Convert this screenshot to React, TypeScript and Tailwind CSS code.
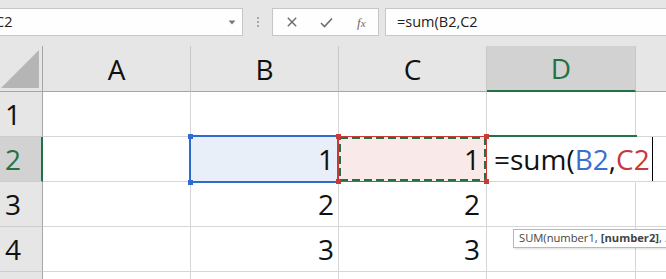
import React from 'react';

const GREEN = '#217346';
const cols = [
  { name: 'A', w: 'w-[148px]', pr: 'pr-[5px]' },
  { name: 'B', w: 'w-[148px]', pr: 'pr-[4px]' },
  { name: 'C', w: 'w-[148px]', pr: 'pr-[6px]' },
  { name: 'D', w: 'w-[149px]', pr: 'pr-[6px]' },
];

const rows: Record<number, (string | null)[]> = {
  1: [null, null, null, null],
  2: [null, '1', '1', null],
  3: [null, '2', '2', null],
  4: [null, '3', '3', null],
  5: [null, null, null, null],
};

function Handle({ className }: { className: string }) {
  return <span className={`absolute w-[5px] h-[5px] z-20 ${className}`} />;
}

function Toolbar() {
  return (
    <div className="h-[46px] flex items-start pt-[8px] overflow-hidden">
      <div className="-ml-[30px] w-[273px] h-[28px] shrink-0 border border-[#c6c6c6] bg-[#fefefe] flex items-center pl-[24px] pr-[6px] text-[14.5px] text-[#222]">
        <span>C2</span>
        <svg className="ml-auto" width="8" height="5" viewBox="0 0 8 5">
          <path d="M0.5 0.5 L7.5 0.5 L4 4.5 Z" fill="#7a7a7a" />
        </svg>
      </div>
      <div className="ml-[14px] mt-[9px] flex flex-col gap-[2px] shrink-0">
        <span className="w-[2px] h-[2px] bg-[#a8a8a8]" />
        <span className="w-[2px] h-[2px] bg-[#a8a8a8]" />
        <span className="w-[2px] h-[2px] bg-[#a8a8a8]" />
      </div>
      <div className="ml-[13px] w-[107px] h-[28px] shrink-0 border border-[#c6c6c6] bg-[#fefefe] flex items-center">
        <svg className="ml-[14px]" width="10" height="10" viewBox="0 0 10 10">
          <path d="M0.8 0.8 L9.2 9.2 M9.2 0.8 L0.8 9.2" stroke="#6b6b6b" strokeWidth="1.4" />
        </svg>
        <svg className="ml-[23px]" width="13" height="11" viewBox="0 0 13 11">
          <path d="M1 6 L4.5 9.5 L12 1.5" stroke="#6b6b6b" strokeWidth="1.6" fill="none" />
        </svg>
        <span className="ml-[24px] text-[13px] italic text-[#6b6b6b] font-['Liberation_Serif',serif] leading-none">
          f<span className="text-[11px]">x</span>
        </span>
      </div>
      <div className="ml-[6px] flex-1 -mr-[10px] h-[28px] border border-[#c6c6c6] bg-[#fefefe] flex items-center pl-[11px] text-[14.5px] text-[#222]">
        =sum(B2,C2
      </div>
    </div>
  );
}

function HeaderRow() {
  return (
    <div className="flex h-[46px]">
      <div className="w-[43px] shrink-0 border-r border-b border-[#a6a6a6]">
        <svg width="42" height="45" viewBox="0 0 42 45">
          <polygon points="39,4 39,42 1,42" fill="#b5b5b5" />
        </svg>
      </div>
      {cols.map((c) => {
        const active = c.name === 'D';
        return (
          <div
            key={c.name}
            className={`${c.w} shrink-0 flex items-center justify-center border-r border-r-[#c8c8c8] ${
              active ? 'bg-[#d2d2d2] border-b-2 border-b-[#217346] text-[#217346]' : 'border-b border-b-[#a6a6a6] text-[#111]'
            }`}
          >
            {c.name}
          </div>
        );
      })}
      <div className="flex-1 border-b border-b-[#a6a6a6]" />
    </div>
  );
}

function DataRow({ n }: { n: number }) {
  const data = rows[n];
  const activeRow = n === 2;
  return (
    <div className="flex h-[45px] bg-white">
      <div
        className={`w-[43px] shrink-0 flex items-center pl-[5px] border-b border-b-[#cdcdcd] ${
          activeRow ? 'bg-[#d2d2d2] border-r-2 border-r-[#217346] text-[#217346]' : 'bg-[#e6e6e6] border-r border-r-[#a6a6a6] text-[#111]'
        }`}
      >
        {n < 5 ? n : null}
      </div>
      {cols.map((c, i) => {
        const isB2 = activeRow && c.name === 'B';
        const isC2 = activeRow && c.name === 'C';
        const isD2 = activeRow && c.name === 'D';
        return (
          <div
            key={c.name}
            className={`${c.w} shrink-0 relative flex items-center justify-end ${c.pr} border-b border-b-[#d6d6d6] border-r ${
              isD2 ? 'border-r-transparent' : 'border-r-[#d6d6d6]'
            }`}
          >
            {isB2 && (
              <>
                <div className="absolute -left-[2px] -top-[2px] -right-[1px] -bottom-[2px] border-2 border-[#2f6bcf] bg-[#e8eff9]" />
                <Handle className="-left-[3px] -top-[3px] bg-[#2f6bcf]" />
                <Handle className="-left-[3px] -bottom-[4px] bg-[#2f6bcf]" />
              </>
            )}
            {isC2 && (
              <>
                <div className="absolute -left-[1px] -top-[1px] -right-[1px] -bottom-[1px] border border-[#c73a3a] bg-[#f9e9e9] z-10">
                  <svg className="absolute inset-0" width="147" height="44" viewBox="0 0 147 44">
                    <rect x="1" y="1" width="145" height="42" fill="none" stroke={GREEN} strokeWidth="2" strokeDasharray="8 4" />
                  </svg>
                </div>
                <Handle className="-left-[3px] -top-[3px] bg-[#c73a3a]" />
                <Handle className="-right-[3px] -top-[3px] bg-[#c73a3a]" />
                <Handle className="-left-[3px] -bottom-[3px] bg-[#c73a3a]" />
                <Handle className="-right-[3px] -bottom-[3px] bg-[#c73a3a]" />
              </>
            )}
            {isD2 && (
              <>
                <div className="absolute -left-[1px] -top-[2px] -right-[2px] h-[2px] bg-[#217346]" />
                <div className="absolute left-[7px] inset-y-0 flex items-center whitespace-nowrap z-20 text-[#111]">
                  <span>=sum(</span>
                  <span className="text-[#3a6fcd]">B2</span>
                  <span>,</span>
                  <span className="text-[#c8393b]">C2</span>
                  <span className="ml-[2px] w-px h-[44px] bg-black" />
                </div>
              </>
            )}
            {data[i] && <span className="relative z-20 text-[#111]">{data[i]}</span>}
          </div>
        );
      })}
      <div className="flex-1 border-b border-b-[#d6d6d6]" />
    </div>
  );
}

export default function App() {
  return (
    <div className="w-[666px] h-[279px] overflow-hidden bg-[#e6e6e6] font-['Open_Sans',sans-serif] relative">
      <Toolbar />
      <div className="text-[28px] leading-none">
        <HeaderRow />
        {[1, 2, 3, 4, 5].map((n) => (
          <DataRow key={n} n={n} />
        ))}
      </div>
      <div className="absolute left-[513px] top-[229px] h-[19px] z-30 bg-white border border-[#b8b8b8] shadow-[1px_1px_2px_rgba(0,0,0,0.15)] flex items-center pl-[5px] pr-[4px] text-[11.2px] text-[#444] whitespace-nowrap">
        SUM(number1, <span className="ml-[3px] font-bold">[number2]</span>, ...)
      </div>
    </div>
  );
}
